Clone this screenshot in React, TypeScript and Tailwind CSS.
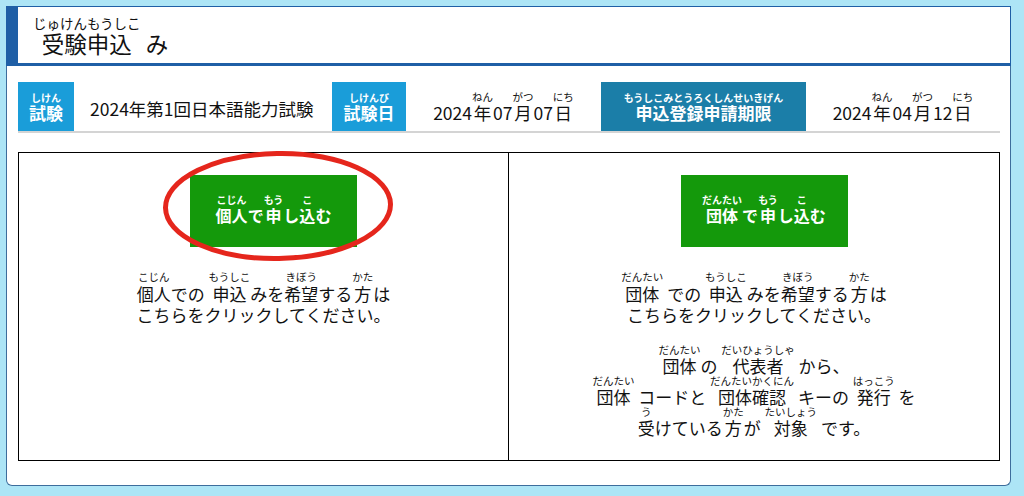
import type { ReactNode } from "react";

// Furigana: reading stacked over its base text. The box is as wide as the
// wider of the two, and its baseline is the base text's baseline.
function R({ b, t, rt = "text-[10.5px] leading-[12px]" }: { b: string; t: string; rt?: string }) {
  return (
    <span className="inline-block text-center">
      <span className={`block whitespace-nowrap ${rt}`}>{t}</span>
      <span className="block">{b}</span>
    </span>
  );
}

function Label({ children, w, bg }: { children: ReactNode; w: string; bg: string }) {
  return (
    <div className={`${w} ${bg} h-[49px] shrink-0 flex items-center justify-center text-white font-bold text-[17px] leading-[19px]`}>
      <span>{children}</span>
    </div>
  );
}

function DateText({ y, m, d }: { y: string; m: string; d: string }) {
  return (
    <span className="text-[17.5px] leading-[19px] text-[#111] whitespace-nowrap">
      {y}
      <R b="年" t="ねん" />
      {m}
      <R b="月" t="がつ" />
      {d}
      <R b="日" t="にち" />
    </span>
  );
}

function GreenButton({ children }: { children: ReactNode }) {
  return (
    <div className="ml-[20px] w-[167px] h-[72px] shrink-0 bg-[#14990b] text-white font-bold text-[16px] leading-[20px] flex items-center justify-center pb-[4px]">
      <span className="whitespace-nowrap">{children}</span>
    </div>
  );
}

const small = "text-[10px] leading-[11px]";

export default function App() {
  return (
    <div className="w-[1024px] h-[496px] bg-[#ade5f6] pt-[6px] pl-[6px] font-['Noto_Sans_CJK_JP',sans-serif] text-[#111]">
      <div className="w-[1005px] h-[480px] flex flex-col">
        {/* Header */}
        <div className="h-[60px] shrink-0 bg-white border-t border-r border-l-[12px] border-b-[3px] border-[#1f5fa6] flex items-end pl-[15px] pb-[7px]">
          <span className="text-[22.5px] leading-[26px] whitespace-nowrap">
            <R b="受験申込" t="じゅけんもうしこ" rt="text-[13.5px] leading-[14px]" /> み
          </span>
        </div>

        {/* Body */}
        <div className="flex-1 bg-white border-x border-b border-[#3d6d9c] rounded-b-[6px] pl-[11px] pr-[10px] pt-[16px]">
          {/* Info row */}
          <div className="flex h-[51px] border-b-2 border-[#d4d4d4]">
            <Label w="w-[56px]" bg="bg-[#1a9dd9]">
              <R b="試験" t="しけん" rt={small} />
            </Label>
            <div className="w-[258px] shrink-0 flex items-center pl-[16px] pt-[4px] text-[17.5px] leading-[20px] whitespace-nowrap">
              2024年第1回日本語能力試験
            </div>
            <Label w="w-[74px]" bg="bg-[#1a9dd9]">
              <R b="試験日" t="しけんび" rt={small} />
            </Label>
            <div className="w-[195px] shrink-0 flex items-center justify-center">
              <DateText y="2024" m="07" d="07" />
            </div>
            <Label w="w-[205px]" bg="bg-[#1b7ea8]">
              <R b="申込登録申請期限" t="もうしこみとうろくしんせいきげん" rt={small} />
            </Label>
            <div className="flex-1 flex items-center justify-center">
              <DateText y="2024" m="04" d="12" />
            </div>
          </div>

          {/* Choice table */}
          <div className="mt-[19px] grid grid-cols-2 h-[309px] border border-black">
            <div className="border-r border-black flex flex-col items-center pt-[22px]">
              <div className="relative">
                <GreenButton>
                  <R b="個人" t="こじん" rt={small} />で<R b="申" t="もう" rt={small} />し<R b="込" t="こ" rt={small} />む
                </GreenButton>
                <svg className="absolute left-[-12px] top-[-28px] pointer-events-none" width="240" height="120" viewBox="0 0 240 120">
                  <ellipse cx="120" cy="59" rx="112.5" ry="52.5" fill="none" stroke="#e5261c" strokeWidth="5" transform="rotate(-1 120 59)" />
                </svg>
              </div>
              <div className="mt-[24px] text-[17px] leading-[21px] text-center whitespace-nowrap">
                <div>
                  <R b="個人" t="こじん" />での <R b="申込" t="もうしこ" />みを<R b="希望" t="きぼう" />する<R b="方" t="かた" />は
                </div>
                <div>こちらをクリックしてください。</div>
              </div>
            </div>

            <div className="flex flex-col items-center pt-[22px]">
              <GreenButton>
                <R b="団体" t="だんたい" rt={small} />で<R b="申" t="もう" rt={small} />し<R b="込" t="こ" rt={small} />む
              </GreenButton>
              <div className="mt-[24px] text-[17px] leading-[21px] text-center whitespace-nowrap">
                <div>
                  <R b="団体" t="だんたい" /> での <R b="申込" t="もうしこ" />みを<R b="希望" t="きぼう" />する<R b="方" t="かた" />は
                </div>
                <div>こちらをクリックしてください。</div>
              </div>
              <div className="mt-[19px] text-[17px] leading-[19px] text-center whitespace-nowrap">
                <div>
                  <R b="団体" t="だんたい" />の <R b="代表者" t="だいひょうしゃ" /> から、
                </div>
                <div>
                  <R b="団体" t="だんたい" /> コードと <R b="団体確認" t="だんたいかくにん" /> キーの <R b="発行" t="はっこう" /> を
                </div>
                <div>
                  <R b="受" t="う" />けている<R b="方" t="かた" />が <R b="対象" t="たいしょう" /> です。
                </div>
              </div>
            </div>
          </div>
        </div>
      </div>
    </div>
  );
}
